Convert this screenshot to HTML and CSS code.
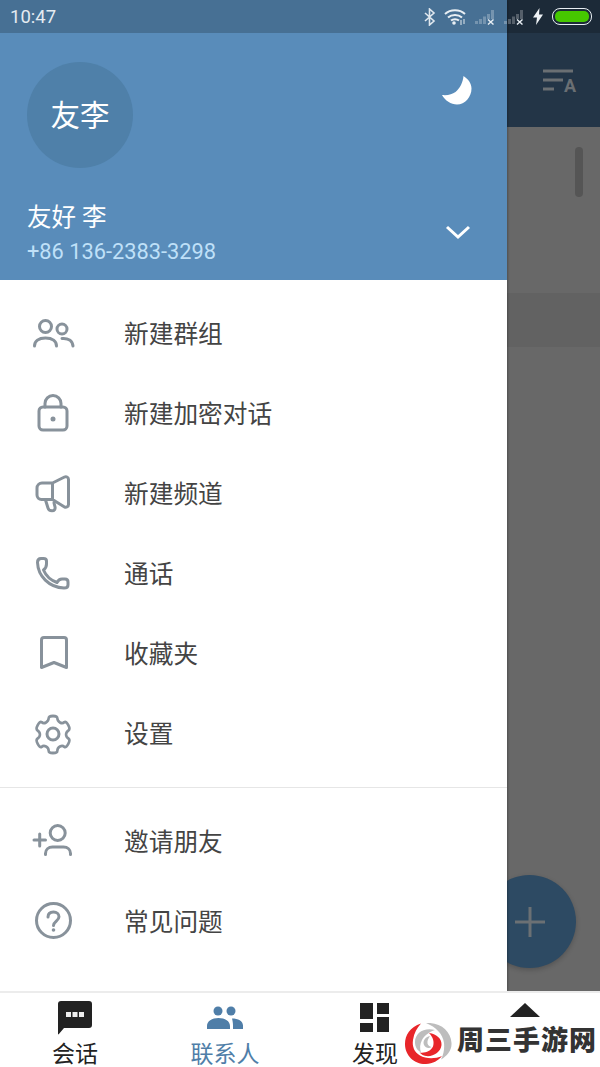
FILE: index.html
```html
<!DOCTYPE html>
<html lang="zh-CN">
<head>
    <meta charset="UTF-8">
    <meta name="viewport" content="width=device-width, initial-scale=1.0">
    <title>Telegram</title>
    <link rel="stylesheet" href="styles.css">
</head>
<body>
    <div class="screen">
        <div class="main">
            <!-- App behind the drawer -->
            <div class="app-header">
                <svg class="sort-icon" width="36" height="30" viewBox="0 0 36 30">
                    <path d="M1 3h30M1 12h20M1 21h11" fill="none" stroke="#6a6f73" stroke-width="3"/>
                    <text x="22" y="24" class="sort-letter">A</text>
                </svg>
            </div>
            <div class="app-list">
                <div class="scroll-thumb"></div>
                <div class="list-band"></div>
            </div>
            <div class="fab">
                <svg width="30" height="30" viewBox="0 0 30 30"><path d="M15 0v30M0 15h30" stroke="#6b7074" stroke-width="3"/></svg>
            </div>

            <!-- Drawer -->
            <aside class="drawer">
                <div class="drawer-head">
                    <div class="avatar-row">
                        <div class="avatar"><span>友李</span></div>
                        <svg class="moon" width="30" height="30" viewBox="0 0 30 30">
                            <path d="M21.500 1C26 4 29.500 8 29.500 13.500C29.500 22 23 29.500 15 29.500C9 29.500 3 25.500 0 20C6 20.500 10 19.500 13.500 17C18 13.500 21 7 21.500 1Z" fill="#fff"/>
                        </svg>
                    </div>
                    <div class="user-row">
                        <div>
                            <div class="user-name">友好 李</div>
                            <div class="user-phone">+86 136-2383-3298</div>
                        </div>
                        <svg class="chevron" width="26" height="16" viewBox="0 0 26 16"><path d="M2 3l11 10L24 3" fill="none" stroke="#fff" stroke-width="3"/></svg>
                    </div>
                </div>

                <ul class="menu">
                    <li class="menu-item">
                        <svg class="menu-icon" viewBox="0 0 44 44">
                            <circle cx="14.500" cy="14.500" r="6"/>
                            <circle cx="31" cy="17" r="5"/>
                            <path d="M3.500 34c0-5 4-8 11-8s11 3 11 8M31 26.500c6-.5 10.500 2 11 7.500"/>
                        </svg>
                        <span>新建群组</span>
                    </li>
                    <li class="menu-item">
                        <svg class="menu-icon" viewBox="0 0 44 44">
                            <rect x="8" y="15" width="28" height="23" rx="4"/>
                            <path d="M14 15v-3.500a8 8 0 0 1 16 0V15"/>
                            <circle class="dot" cx="22" cy="27" r="2.500"/>
                        </svg>
                        <span>新建加密对话</span>
                    </li>
                    <li class="menu-item">
                        <svg class="menu-icon" viewBox="0 0 44 44">
                            <g transform="translate(.5 1.5)">
                                <path d="M21 9.500H10.500a5 5 0 0 0-5 5v7a4.500 4.500 0 0 0 4.500 4.500H21M21 9.500L33 3.500c2-1 4 .5 4 2.500v25c0 2-2 3-4 2.500L21 26zM21 9.500V26"/>
                                <path d="M14 26.500l2.500 8c.5 2 2 2.800 4 2.800 2.500 0 3.500-2 3-4l-1-4"/>
                            </g>
                        </svg>
                        <span>新建频道</span>
                    </li>
                    <li class="menu-item">
                        <svg class="menu-icon" viewBox="0 0 44 44">
                            <path d="M10 6.500c-2.500 0-3.500 1.500-3.500 4C7 24 18 35.500 33 36c2.500 0 4-1 4-3v-3c0-2-1.500-3-3-3h-3c-3 0-4 1.500-5 3.500C19 28 15 24 12.500 18c2-1.500 3-3 3-6V9c0-2-1.500-2.500-3-2.500z"/>
                        </svg>
                        <span>通话</span>
                    </li>
                    <li class="menu-item">
                        <svg class="menu-icon" viewBox="0 0 44 44">
                            <path d="M10.500 8c0-1.800 1-2.500 2.500-2.500h20c1.500 0 2.500.7 2.500 2.500v27.500l-12.500-5-12.500 5z"/>
                        </svg>
                        <span>收藏夹</span>
                    </li>
                    <li class="menu-item">
                        <svg class="menu-icon" viewBox="0 0 44 44">
                            <circle cx="22" cy="22" r="6"/>
                            <path transform="translate(22 22) scale(.87 .95) translate(-22 -22)" d="M17 5.500c0-2 2-2.500 5-2.500s5 .5 5 2.500c0 2.500 1.500 3.500 3 4.300s3.500 1 5-.3c1.500-1 3 .5 4.500 3s2 4.500.5 5.500c-2.500 1.500-3 3-3 4.500s.5 3 3 4.500c1.500 1 1 3-.5 5.500s-3 4-4.500 3c-1.500-1.300-3.500-1.100-5-.3s-3 1.800-3 4.300c0 2-2 2.500-5 2.500s-5-.5-5-2.500c0-2.500-1.500-3.500-3-4.300s-3.500-1-5 .3c-1.500 1-3-.5-4.500-3s-2-4.500-.5-5.500c2.500-1.500 3-3 3-4.500s-.5-3-3-4.500c-1.500-1-1-3 .5-5.500s3-4 4.500-3c1.500 1.300 3.500 1.100 5 .3s3-1.800 3-4.300z"/>
                        </svg>
                        <span>设置</span>
                    </li>
                </ul>

                <ul class="menu menu-second">
                    <li class="menu-item">
                        <svg class="menu-icon" viewBox="0 0 44 44">
                            <circle cx="26.700" cy="13" r="7.500"/>
                            <path d="M14.500 34.500v-1c0-4 3-6.500 7-6.500h11c4 0 7 2.500 7 6.500v1M3 20h11.500M8.700 14v12"/>
                        </svg>
                        <span>邀请朋友</span>
                    </li>
                    <li class="menu-item">
                        <svg class="menu-icon" viewBox="0 0 44 44">
                            <circle cx="22.500" cy="20.500" r="17"/>
                            <path d="M17 17c0-3.500 2.300-5 5.500-5s5.500 1.800 5.500 4.800c0 4-5.500 4.500-5.500 8.700"/>
                            <circle class="dot" cx="22.500" cy="30" r="1.800"/>
                        </svg>
                        <span>常见问题</span>
                    </li>
                </ul>
            </aside>

            <!-- Status bar -->
            <div class="status-bar">
                <span class="clock">10:47</span>
                <div class="status-icons">
                    <svg width="12" height="18" viewBox="0 0 12 18"><path d="M1 5l9 8-4.500 4V1L10 5 1 13" fill="none" stroke="#dfe7ee" stroke-width="1.600"/></svg>
                    <svg class="wifi" width="22" height="17" viewBox="0 0 22 17">
                        <path d="M1 6c5.500-5 14.500-5 20 0M4 9.500c3.800-3.400 10.200-3.400 14 0M7 12.500c2.200-1.800 5.800-1.800 8 0" fill="none" stroke="#e8eef3" stroke-width="2"/>
                        <circle cx="10" cy="15" r="1.800" fill="#e8eef3"/>
                        <path d="M17 12v5M20 11v5" stroke="#c9d5df" stroke-width="1.200"/>
                    </svg>
                    <svg class="signal" width="22" height="16" viewBox="0 0 22 16">
                        <path d="M1 12h3v3H1zM5 10h3v5H5zM9 7.500h3V15H9zM13 5h3v5h-3zM17 1h3v9h-3z" fill="#fff" fill-opacity=".25"/>
                        <path d="M14 10.500l5.500 5M19.500 10.500l-5.500 5" stroke="#e8eef3" stroke-width="1.400"/>
                    </svg>
                    <svg class="signal signal-second" width="22" height="16" viewBox="0 0 22 16">
                        <path d="M1 12h3v3H1zM5 10h3v5H5zM9 7.500h3V15H9zM13 5h3v5h-3zM17 1h3v9h-3z" fill="#fff" fill-opacity=".25"/>
                        <path d="M14 10.500l5.500 5M19.500 10.500l-5.500 5" stroke="#e8eef3" stroke-width="1.400"/>
                    </svg>
                    <svg width="10" height="17" viewBox="0 0 10 17"><path d="M6.500 0L0 9.500h4L3 17l7-10.500H6z" fill="#eef2f5"/></svg>
                    <div class="battery"><div class="battery-fill"></div></div>
                </div>
            </div>
        </div>

        <nav class="tabbar">
            <div class="tab">
                <svg class="tab-icon" width="36" height="34" viewBox="0 0 36 34">
                    <path d="M4 0h28a3 3 0 0 1 3 3v21a3 3 0 0 1-3 3H7l-5.500 6.500-.5-.5V3a3 3 0 0 1 3-3z" fill="#222"/>
                    <path d="M9 11h5v5H9zM15.500 11h5v5h-5zM22 11h5v5h-5z" fill="#eee"/>
                </svg>
                <span>会话</span>
            </div>
            <div class="tab tab-active">
                <svg class="tab-icon" width="36" height="34" viewBox="0 0 36 34">
                    <circle cx="11" cy="10" r="4.500"/>
                    <circle cx="24" cy="10" r="4.500"/>
                    <path d="M0 28v-3c0-5 5-8 11.500-8S23 20 23 25v3zM25 17.500c6 0 11 2.500 11 7v3.500H26v-3.500c0-3-.5-5-1-7z"/>
                </svg>
                <span>联系人</span>
            </div>
            <div class="tab">
                <svg class="tab-icon" width="36" height="34" viewBox="0 0 36 34">
                    <path d="M3 2h13v16H3zM3 22h13v9H3zM20 2h12v11H20zM20 16h12v15H20z" fill="#222"/>
                </svg>
                <span>发现</span>
            </div>
            <div class="tab tab-more">
                <svg width="30" height="14" viewBox="0 0 30 14"><path d="M15 0l15 14H0z" fill="#222"/></svg>
            </div>
        </nav>

        <!-- Watermark -->
        <div class="watermark">
            <svg width="47" height="42" viewBox="0 0 47 42">
                <path d="M21 0C35-1 46 8 46.500 20C47 27 42 33 36 36.500C39 31 39.500 25 39 20C38 11 31 4 21 0Z" fill="#bdbdbd"/>
                <path d="M30 7C19 4 10 10 10 19C10 24 12 27 16 29.500C14.500 25 15 21 17 17C19 13 24 9 30 7Z" fill="#bdbdbd"/>
                <path d="M25 13C20 14 17.500 18 19 22C20.500 25 24 26 26.500 24C24.500 23.500 23 22.500 22.500 20.500C22 18 23.500 15 25 13Z" fill="#bdbdbd"/>
                <path d="M16 .5C5 4 0 12 0 21C0 33 10 41.500 21 41C28 40.500 33 38 37 33C30 36 21 36 15 32.500C9 29 7 23 8 17C9 10 12 5 16 .5Z" fill="#e8262a"/>
                <path d="M24 10C32 11 37 16 36.500 22C36 29 28 34 21 33C18 32.500 16 31 14.500 29.500C20 30.500 26 28 28 23.500C29.500 19 28 14 24 10Z" fill="#e8262a"/>
            </svg>
            <span>周三手游网</span>
        </div>
    </div>
</body>
</html>
```

FILE: styles.css
```css
* {
    margin: 0;
    padding: 0;
    box-sizing: border-box;
    font-family: "Roboto", "Noto Sans CJK SC", sans-serif;
}

body {
    width: 600px;
    height: 1067px;
    overflow: hidden;
    background: #fff;
}

.screen {
    position: relative;
    display: flex;
    flex-direction: column;
    width: 600px;
    height: 1067px;
}

.main {
    position: relative;
    flex: 1;
    display: flex;
    flex-direction: column;
    background: #686868;
    overflow: hidden;
}

/* App behind the drawer */
.app-header {
    height: 127px;
    background: #233547;
    display: flex;
    justify-content: flex-end;
    align-items: flex-start;
    padding: 68px 22px 0 0;
}

.sort-letter {
    font-size: 18px;
    font-weight: 700;
    fill: #6a6f73;
}

.app-list {
    position: relative;
    flex: 1;
    background: #686868;
}

.scroll-thumb {
    position: absolute;
    top: 20px;
    right: 17px;
    width: 8px;
    height: 50px;
    border-radius: 4px;
    background: #555;
}

.list-band {
    position: absolute;
    top: 166px;
    left: 0;
    right: 0;
    height: 54px;
    background: #626262;
}

.fab {
    position: absolute;
    top: 875px;
    left: 483px;
    width: 93px;
    height: 93px;
    border-radius: 50%;
    background: #2d4a63;
    display: flex;
    align-items: center;
    justify-content: center;
    box-shadow: 0 2px 5px rgba(0, 0, 0, 0.2);
}

/* Drawer */
.drawer {
    position: absolute;
    top: 0;
    left: 0;
    bottom: 0;
    width: 507px;
    background: #fff;
    box-shadow: 1px 0 2px rgba(0, 0, 0, 0.25);
}

.drawer-head {
    height: 280px;
    background: #598cba;
    padding: 62px 36px 0 27px;
}

.avatar-row {
    display: flex;
    justify-content: space-between;
    align-items: flex-start;
}

.avatar {
    width: 106px;
    height: 106px;
    border-radius: 50%;
    background: #4f80a9;
    color: #fff;
    font-size: 29.5px;
    display: flex;
    align-items: center;
    justify-content: center;
    padding-bottom: 4px;
}

.moon {
    margin-top: 13px;
    margin-right: -1px;
}

.user-row {
    display: flex;
    justify-content: space-between;
    align-items: center;
    margin-top: 33px;
}

.user-name {
    color: #fff;
    font-size: 24.5px;
    line-height: 34px;
}

.user-phone {
    color: #bfe0f8;
    font-size: 21.8px;
    line-height: 33px;
}

.chevron {
    margin-top: -6px;
}

.menu {
    list-style: none;
    padding-top: 14px;
    padding-bottom: 13px;
}

.menu-second {
    border-top: 1px solid #e6e6e6;
    padding-top: 14px;
}

.menu-item {
    display: flex;
    align-items: center;
    height: 80px;
    padding-left: 31px;
    color: #444;
    font-size: 24.7px;
}

.menu-item span {
    padding-bottom: 4px;
}

.menu-icon {
    width: 44px;
    height: 44px;
    margin-right: 49px;
    fill: none;
    stroke: #88929b;
    stroke-width: 3;
    stroke-linecap: round;
    stroke-linejoin: round;
}

.menu-icon .dot {
    fill: #88929b;
    stroke: none;
}

/* Status bar */
.status-bar {
    position: absolute;
    top: 0;
    left: 0;
    right: 0;
    height: 33px;
    background: rgba(0, 0, 0, 0.2);
    display: flex;
    justify-content: space-between;
    align-items: center;
    padding: 0 8px 0 10px;
}

.clock {
    color: #e4ebf1;
    font-size: 18.5px;
}

.status-icons {
    display: flex;
    align-items: center;
    gap: 8px;
}

.signal-second {
    margin-left: -1px;
}

.battery {
    width: 40px;
    height: 17px;
    margin-left: 1px;
    border: 1px solid #e8eef3;
    border-radius: 8px;
    padding: 2px;
}

.battery-fill {
    height: 100%;
    border-radius: 5px;
    background: #46c800;
}

/* Bottom tabs */
.tabbar {
    height: 76px;
    display: grid;
    grid-template-columns: 150px 150px 150px 150px;
    background: #fff;
    border-top: 2px solid #ececec;
}

.tab {
    display: flex;
    flex-direction: column;
    align-items: center;
    padding-top: 8px;
    color: #222;
    font-size: 23px;
    line-height: 30px;
}

.tab span {
    margin-top: 5px;
}

.tab-active {
    color: #4f7ea8;
}

.tab-active .tab-icon {
    fill: #4f7ea8;
}

.tab-more {
    padding-top: 10px;
}

.watermark {
    position: absolute;
    top: 1023px;
    left: 405px;
    display: flex;
    align-items: flex-start;
    gap: 5px;
    width: 195px;
    height: 44px;
    background: #fff;
    color: #333;
    font-size: 27px;
    line-height: 36px;
    font-weight: 900;
    letter-spacing: 1px;
    white-space: nowrap;
}
```
